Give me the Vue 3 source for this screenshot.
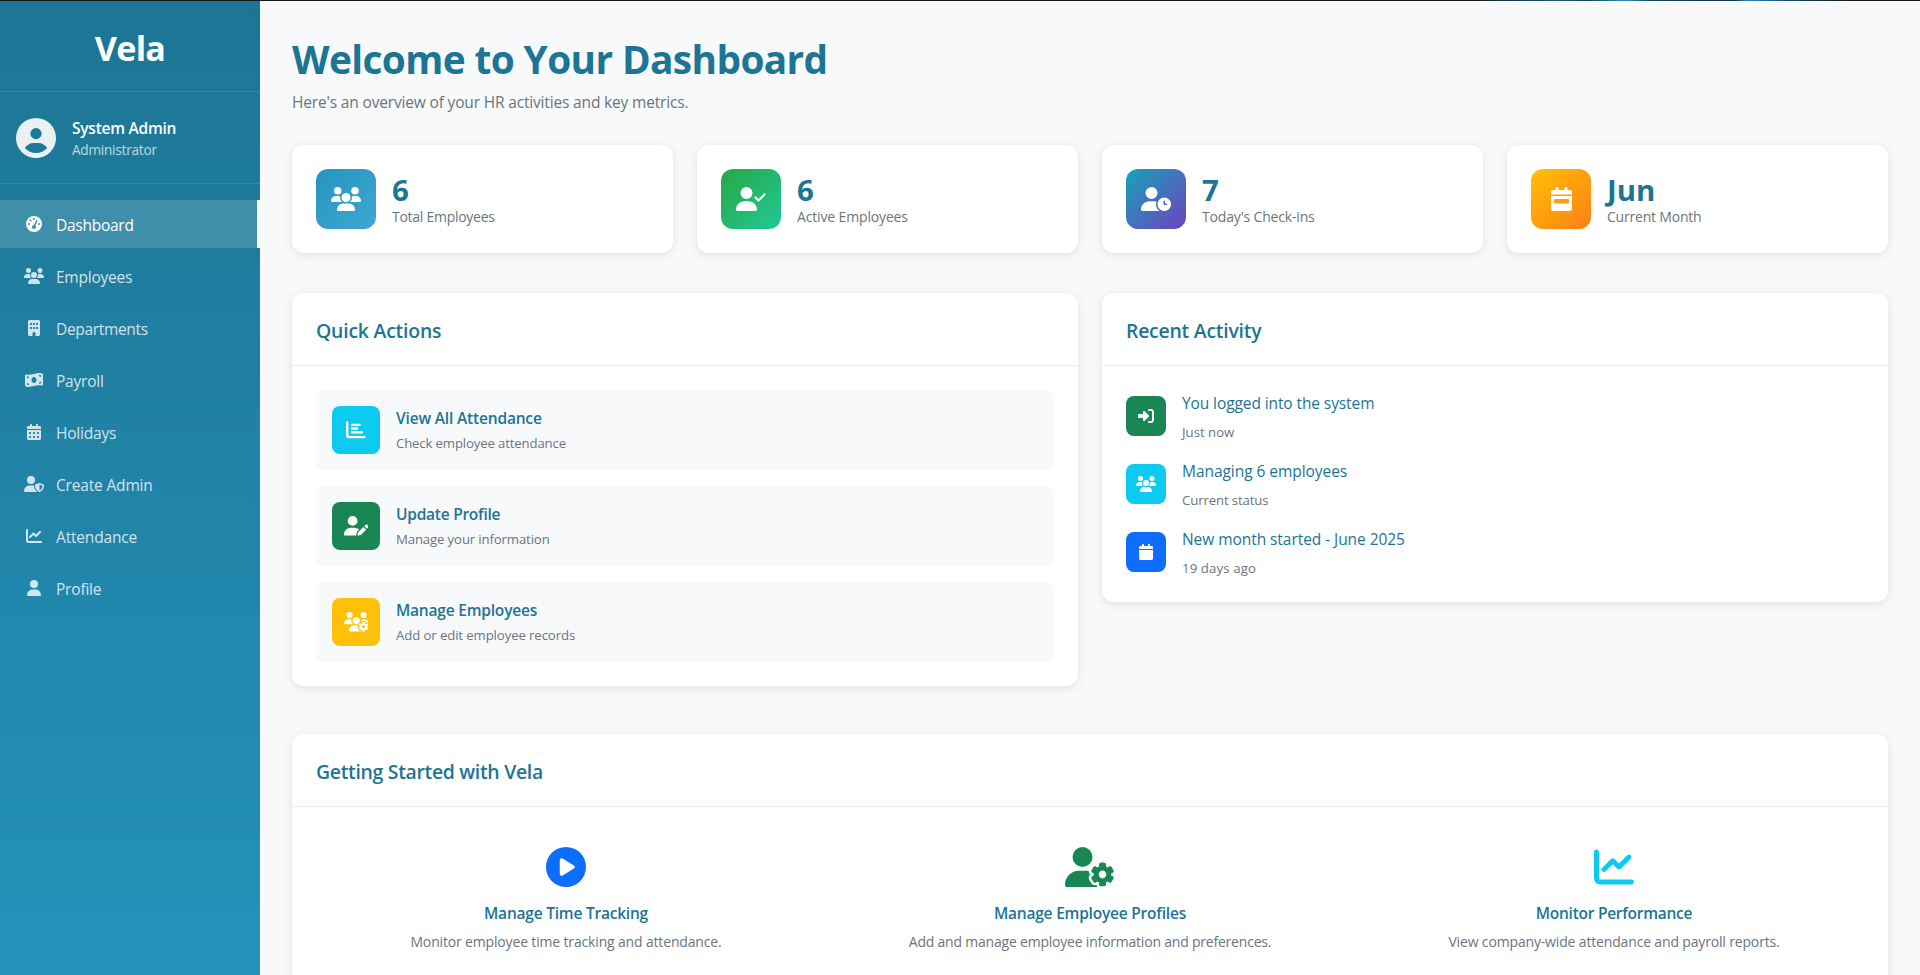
<script setup>
import { h } from 'vue'

const userPath = 'M224 256A128 128 0 1 0 224 0a128 128 0 1 0 0 256zm-45.7 48C79.8 304 0 383.8 0 482.3C0 498.7 13.3 512 29.7 512H418.3c16.4 0 29.7-13.3 29.7-29.7C448 383.8 368.2 304 269.7 304H178.3z'
const calendarTop = 'M128 0c17.7 0 32 14.3 32 32V64H288V32c0-17.7 14.3-32 32-32s32 14.3 32 32V64h48c26.5 0 48 21.5 48 48v48H0V112C0 85.5 21.5 64 48 64H96V32c0-17.7 14.3-32 32-32zM0 192H448V464c0 26.5-21.5 48-48 48H48c-26.5 0-48-21.5-48-48V192z'

// name: [viewBox width, path]; every glyph is 512 units high
const glyphs = {
  circleUser: [512, 'M399 384.2C376.9 345.8 335.4 320 288 320H224c-47.4 0-88.9 25.8-111 64.2c35.2 39.2 86.2 63.8 143 63.8s107.8-24.7 143-63.8zM0 256a256 256 0 1 1 512 0A256 256 0 1 1 0 256zm256 16a72 72 0 1 0 0-144 72 72 0 1 0 0 144z'],
  gauge: [512, 'M0 256a256 256 0 1 1 512 0A256 256 0 1 1 0 256zM288 96a32 32 0 1 0 -64 0 32 32 0 1 0 64 0zM256 416c35.3 0 64-28.7 64-64c0-17.4-6.9-33.1-18.1-44.6L366 161.7c5.3-12.1-.2-26.3-12.3-31.6s-26.3 .2-31.6 12.3L257.9 288c-.6 0-1.3 0-1.9 0c-35.3 0-64 28.7-64 64s28.7 64 64 64zM176 144a32 32 0 1 0 -64 0 32 32 0 1 0 64 0zM96 288a32 32 0 1 0 0-64 32 32 0 1 0 0 64zm352-32a32 32 0 1 0 -64 0 32 32 0 1 0 64 0z'],
  users: [640, 'M144 0a80 80 0 1 1 0 160A80 80 0 1 1 144 0zM512 0a80 80 0 1 1 0 160A80 80 0 1 1 512 0zM0 298.7C0 239.8 47.8 192 106.7 192h42.7c15.9 0 31 3.5 44.6 9.7c-1.3 7.2-1.9 14.7-1.9 22.3c0 38.2 16.8 72.5 43.3 96c-.2 0-.4 0-.7 0H21.3C9.6 320 0 310.4 0 298.7zM405.3 320c-.2 0-.4 0-.7 0c26.6-23.5 43.3-57.8 43.3-96c0-7.6-.7-15-1.9-22.3c13.6-6.3 28.7-9.7 44.6-9.7h42.7C592.2 192 640 239.8 640 298.7c0 11.8-9.6 21.3-21.3 21.3H405.3zM224 224a96 96 0 1 1 192 0 96 96 0 1 1 -192 0zM128 485.3C128 411.7 187.7 352 261.3 352H378.7C452.3 352 512 411.7 512 485.3c0 14.7-11.9 26.7-26.7 26.7H154.7c-14.7 0-26.7-11.9-26.7-26.7z'],
  building: [384, 'M48 0C21.5 0 0 21.5 0 48V464c0 26.5 21.5 48 48 48h96V432c0-26.5 21.5-48 48-48s48 21.5 48 48v80h96c26.5 0 48-21.5 48-48V48c0-26.5-21.5-48-48-48H48zM64 240c0-8.8 7.2-16 16-16h32c8.8 0 16 7.2 16 16v32c0 8.8-7.2 16-16 16H80c-8.8 0-16-7.2-16-16V240zm112-16h32c8.8 0 16 7.2 16 16v32c0 8.8-7.2 16-16 16H176c-8.8 0-16-7.2-16-16V240c0-8.8 7.2-16 16-16zm80 16c0-8.8 7.2-16 16-16h32c8.8 0 16 7.2 16 16v32c0 8.8-7.2 16-16 16H272c-8.8 0-16-7.2-16-16V240zM80 96h32c8.8 0 16 7.2 16 16v32c0 8.8-7.2 16-16 16H80c-8.8 0-16-7.2-16-16V112c0-8.8 7.2-16 16-16zm80 16c0-8.8 7.2-16 16-16h32c8.8 0 16 7.2 16 16v32c0 8.8-7.2 16-16 16H176c-8.8 0-16-7.2-16-16V112zM272 96h32c8.8 0 16 7.2 16 16v32c0 8.8-7.2 16-16 16H272c-8.8 0-16-7.2-16-16V112c0-8.8 7.2-16 16-16z'],
  money: [576, 'M0 112.5V422.3c0 18 10.1 35 27 41.3c87 32.5 174 10.3 261-11.9c79.8-20.3 159.6-40.7 239.3-18.9c23 6.3 48.7-9.5 48.7-33.4V89.7c0-18-10.1-35-27-41.3C462 15.9 375 38.1 288 60.3C208.2 80.6 128.4 100.9 48.7 79.1C25.6 72.8 0 88.6 0 112.5zM288 352c-44.2 0-80-43-80-96s35.8-96 80-96s80 43 80 96s-35.8 96-80 96zM64 352c35.3 0 64 28.7 64 64H64V352zm64-208c0 35.3-28.7 64-64 64V144h64zM512 304v64H448c0-35.3 28.7-64 64-64zM448 96h64v64c-35.3 0-64-28.7-64-64z'],
  calendar: [448, calendarTop],
  calendarDays: [448, calendarTop + 'M64 272v32c0 8.8 7.2 16 16 16h32c8.8 0 16-7.2 16-16V272c0-8.8-7.2-16-16-16H80c-8.8 0-16 7.2-16 16zm128 0v32c0 8.8 7.2 16 16 16h32c8.8 0 16-7.2 16-16V272c0-8.8-7.2-16-16-16H208c-8.8 0-16 7.2-16 16zm144-16c-8.8 0-16 7.2-16 16v32c0 8.8 7.2 16 16 16h32c8.8 0 16-7.2 16-16V272c0-8.8-7.2-16-16-16H336zM64 400v32c0 8.8 7.2 16 16 16h32c8.8 0 16-7.2 16-16V400c0-8.8-7.2-16-16-16H80c-8.8 0-16 7.2-16 16zm144-16c-8.8 0-16 7.2-16 16v32c0 8.8 7.2 16 16 16h32c8.8 0 16-7.2 16-16V400c0-8.8-7.2-16-16-16H208zm112 16v32c0 8.8 7.2 16 16 16h32c8.8 0 16-7.2 16-16V400c0-8.8-7.2-16-16-16H336c-8.8 0-16 7.2-16 16z'],
  calendarWeek: [448, calendarTop + 'M80 256c-8.8 0-16 7.2-16 16v64c0 8.8 7.2 16 16 16H368c8.8 0 16-7.2 16-16V272c0-8.8-7.2-16-16-16H80z'],
  userShield: [640, 'M224 256A128 128 0 1 0 224 0a128 128 0 1 0 0 256zm-45.7 48C79.8 304 0 383.8 0 482.3C0 498.7 13.3 512 29.7 512H418.3c1.8 0 3.5-.2 5.3-.5c-76.3-55.1-99.8-141-103.1-200.2c-16.1-4.8-33.1-7.3-50.7-7.3H178.3zm308.8-78.3l-120 48C358 277.4 352 286.2 352 296c0 63.3 25.9 168.8 134.8 214.2c5.9 2.5 12.6 2.5 18.5 0C614.1 464.8 640 359.3 640 296c0-9.8-6-18.6-15.1-22.3l-120-48c-5.7-2.3-12.1-2.3-17.8 0zM591.4 312c-3.9 50.7-27.2 116.7-95.4 149.7V273.8L591.4 312z'],
  chartLine: [512, 'M64 64c0-17.7-14.3-32-32-32S0 46.3 0 64V400c0 44.2 35.8 80 80 80H480c17.7 0 32-14.3 32-32s-14.3-32-32-32H80c-8.8 0-16-7.2-16-16V64zm406.6 86.6c12.5-12.5 12.5-32.8 0-45.3s-32.8-12.5-45.3 0L320 210.7l-57.4-57.4c-12.5-12.5-32.8-12.5-45.3 0l-112 112c-12.5 12.5-12.5 32.8 0 45.3s32.8 12.5 45.3 0L240 221.3l57.4 57.4c12.5 12.5 32.8 12.5 45.3 0l128-128z'],
  chartBar: [512, 'M32 32c17.7 0 32 14.3 32 32V400c0 8.8 7.2 16 16 16H480c17.7 0 32 14.3 32 32s-14.3 32-32 32H80c-44.2 0-80-35.8-80-80V64C0 46.3 14.3 32 32 32zm96 96c0-17.7 14.3-32 32-32l192 0c17.7 0 32 14.3 32 32s-14.3 32-32 32l-192 0c-17.7 0-32-14.3-32-32zm32 64H288c17.7 0 32 14.3 32 32s-14.3 32-32 32H160c-17.7 0-32-14.3-32-32s14.3-32 32-32zm0 96H416c17.7 0 32 14.3 32 32s-14.3 32-32 32H160c-17.7 0-32-14.3-32-32s14.3-32 32-32z'],
  user: [448, userPath],
  userCheck: [640, userPath + 'M625 177L497 305c-9.4 9.4-24.6 9.4-33.9 0l-64-64c-9.4-9.4-9.4-24.6 0-33.9s24.6-9.4 33.9 0l47 47L591 143c9.4-9.4 24.6-9.4 33.9 0s9.4 24.6 0 33.9z'],
  userClock: [640, 'M224 0a128 128 0 1 1 0 256A128 128 0 1 1 224 0zM178.3 304h91.4c20.6 0 40.4 3.5 58.8 9.9C323 331 320 349.1 320 368c0 59.5 29.5 112.1 74.8 144H29.7C13.3 512 0 498.7 0 482.3C0 383.8 79.8 304 178.3 304zM352 368a144 144 0 1 1 288 0 144 144 0 1 1 -288 0zm144-80c-8.8 0-16 7.2-16 16v64c0 8.8 7.2 16 16 16h48c8.8 0 16-7.2 16-16s-7.2-16-16-16H512V304c0-8.8-7.2-16-16-16z'],
  userPen: [640, 'M224 256A128 128 0 1 0 224 0a128 128 0 1 0 0 256zm-45.7 48C79.8 304 0 383.8 0 482.3C0 498.7 13.3 512 29.7 512H322.8c-3.1-8.8-3.7-18.4-1.4-27.8l15-60.1c2.8-11.3 8.6-21.5 16.8-29.7l40.3-40.3c-32.1-31-75.7-50.1-123.9-50.1H178.3zm435.5-68.3c-15.6-15.6-40.9-15.6-56.6 0l-29.4 29.4 71 71 29.4-29.4c15.6-15.6 15.6-40.9 0-56.6l-14.4-14.4zM375.9 417c-4.1 4.1-7 9.2-8.4 14.9l-15 60.1c-1.4 5.5 .2 11.2 4.2 15.2s9.7 5.6 15.2 4.2l60.1-15c5.6-1.4 10.8-4.3 14.9-8.4L576.1 358.7l-71-71L375.9 417z'],
  userGear: [640, 'M224 0a128 128 0 1 1 0 256A128 128 0 1 1 224 0zM178.3 304h91.4c11.8 0 23.4 1.2 34.5 3.3c-2.1 18.5 7.4 35.6 21.8 44.8c-16.6 10.6-26.7 31.6-20 53.3c4 12.9 9.4 25.5 16.4 37.6s15.2 23.1 24.4 33c15.7 16.9 39.6 18.4 57.2 8.7v.9c0 9.2 2.7 18.5 7.9 26.3H29.7C13.3 512 0 498.7 0 482.3C0 383.8 79.8 304 178.3 304zM436 218.2c0-7 4.5-13.3 11.3-14.8c10.5-2.4 21.5-3.7 32.7-3.7s22.2 1.3 32.7 3.7c6.8 1.5 11.3 7.8 11.3 14.8v30.6c7.9 3.4 15.4 7.7 22.3 12.8l24.9-14.3c6.1-3.5 13.7-2.7 18.5 2.4c7.6 8.1 14.3 17.2 20.1 27.2s10.3 20.4 13.5 31c2.1 6.7-1.1 13.7-7.2 17.2l-25 14.4c.4 4 .7 8.1 .7 12.3s-.2 8.2-.7 12.3l25 14.4c6.1 3.5 9.2 10.5 7.2 17.2c-3.3 10.6-7.8 21-13.5 31s-12.5 19.1-20.1 27.2c-4.8 5.1-12.5 5.9-18.5 2.4l-24.9-14.3c-6.9 5.1-14.3 9.4-22.3 12.8l0 30.6c0 7-4.5 13.3-11.3 14.8c-10.5 2.4-21.5 3.7-32.7 3.7s-22.2-1.3-32.7-3.7c-6.8-1.5-11.3-7.8-11.3-14.8V454.8c-8-3.4-15.6-7.7-22.5-12.9l-24.7 14.3c-6.1 3.5-13.7 2.7-18.5-2.4c-7.6-8.1-14.3-17.2-20.1-27.2s-10.3-20.4-13.5-31c-2.1-6.7 1.1-13.7 7.2-17.2l24.8-14.3c-.4-4.1-.7-8.2-.7-12.4s.2-8.3 .7-12.4L343.8 325c-6.1-3.5-9.2-10.5-7.2-17.2c3.3-10.6 7.7-21 13.5-31s12.5-19.1 20.1-27.2c4.8-5.1 12.4-5.9 18.5-2.4l24.8 14.3c6.9-5.1 14.5-9.4 22.5-12.9V218.2zm92.1 133.5a48.1 48.1 0 1 0 -96.1 0 48.1 48.1 0 1 0 96.1 0z'],
  usersGear: [640, 'M144 160A80 80 0 1 0 144 0a80 80 0 1 0 0 160zm368 0A80 80 0 1 0 512 0a80 80 0 1 0 0 160zM0 298.7C0 310.4 9.6 320 21.3 320H234.7c.2 0 .4 0 .7 0c-26.6-23.5-43.3-57.8-43.3-96c0-7.6 .7-15 1.9-22.3c-13.6-6.3-28.7-9.7-44.6-9.7H106.7C47.8 192 0 239.8 0 298.7zM320 320c24 0 45.9-8.8 62.7-23.3c2.5-3.7 5.2-7.3 8-10.7c2.7-3.3 5.7-6.1 9-8.3C410 262.3 416 243.9 416 224c0-53-43-96-96-96s-96 43-96 96s43 96 96 96zm65.4 60.2c-10.3-5.9-18.1-16.2-20.8-28.2H261.3C187.7 352 128 411.7 128 485.3c0 14.7 11.9 26.7 26.7 26.7H455.2c-2.1-5.2-3.2-10.9-3.2-16.4v-3c-1.3-.7-2.7-1.5-4-2.3l-2.6 1.5c-16.8 9.7-40.5 8-54.7-9.7c-4.5-5.6-8.6-11.5-12.4-17.6l-.1-.2-.1-.2-2.4-4.1-.1-.2-.1-.2c-3.4-6.2-6.4-12.6-9-19.3c-8.2-21.2 2.2-42.6 19-52.3l2.7-1.5c0-.8 0-1.5 0-2.3s0-1.5 0-2.3l-2.7-1.5zM533.3 192H490.7c-15.9 0-31 3.5-44.6 9.7c1.3 7.2 1.9 14.7 1.9 22.3c0 17.4-3.5 33.9-9.7 49c2.5 .9 4.9 2 7.1 3.3l2.6 1.5c1.3-.8 2.6-1.6 4-2.3v-3c0-19.4 13.3-39.1 35.8-42.6c7.9-1.2 16-1.9 24.2-1.9s16.3 .6 24.2 1.9c22.5 3.5 35.8 23.2 35.8 42.6v3c1.3 .7 2.7 1.5 4 2.3l2.6-1.5c16.8-9.7 40.5-8 54.7 9.7c2.3 2.8 4.5 5.8 6.6 8.7c-2.1-57.1-49-102.7-106.6-102.7zm91.3 163.9c6.3-3.6 9.5-11.1 6.8-18c-2.1-5.5-4.6-10.8-7.4-15.9l-2.3-4c-3.1-5.1-6.5-9.9-10.2-14.5c-4.6-5.7-12.7-6.7-19-3L574.4 311c-8.9-7.6-19.1-13.6-30.4-17.6v-21c0-7.3-4.9-13.8-12.1-14.9c-6.5-1-13.1-1.5-19.9-1.5s-13.4 .5-19.9 1.5c-7.2 1.1-12.1 7.6-12.1 14.9v21c-11.2 4-21.5 10-30.4 17.6l-18.2-10.5c-6.3-3.6-14.4-2.6-19 3c-3.7 4.6-7.1 9.5-10.2 14.6l-2.3 3.9c-2.8 5.1-5.3 10.4-7.4 15.9c-2.6 6.8 .5 14.3 6.8 17.9l18.2 10.5c-1 5.7-1.6 11.6-1.6 17.6s.6 11.9 1.6 17.5l-18.2 10.5c-6.3 3.6-9.5 11.1-6.8 17.9c2.1 5.5 4.6 10.7 7.4 15.8l2.4 4.1c3 5.1 6.4 9.9 10.1 14.5c4.6 5.7 12.7 6.7 19 3L449.6 457c8.9 7.6 19.2 13.6 30.4 17.6v21c0 7.3 4.9 13.8 12.1 14.9c6.5 1 13.1 1.5 19.9 1.5s13.4-.5 19.9-1.5c7.2-1.1 12.1-7.6 12.1-14.9v-21c11.2-4 21.5-10 30.4-17.6l18.2 10.5c6.3 3.6 14.4 2.6 19-3c3.7-4.6 7.1-9.4 10.1-14.5l2.4-4.2c2.8-5.1 5.3-10.3 7.4-15.8c2.6-6.8-.5-14.3-6.8-17.9l-18.2-10.5c1-5.7 1.6-11.6 1.6-17.5s-.6-11.9-1.6-17.6l18.2-10.5zM472 384a40 40 0 1 1 80 0 40 40 0 1 1 -80 0z'],
  signIn: [512, 'M217.9 105.9L340.7 228.7c7.2 7.2 11.3 17.1 11.3 27.3s-4.1 20.1-11.3 27.3L217.9 406.1c-6.4 6.4-15 9.9-24 9.9c-18.7 0-33.9-15.2-33.9-33.9l0-62.1L32 320c-17.7 0-32-14.3-32-32l0-64c0-17.7 14.3-32 32-32l128 0 0-62.1c0-18.7 15.2-33.9 33.9-33.9c9 0 17.6 3.6 24 9.9zM352 416l64 0c17.7 0 32-14.3 32-32l0-256c0-17.7-14.3-32-32-32l-64 0c-17.7 0-32-14.3-32-32s14.3-32 32-32l64 0c53 0 96 43 96 96l0 256c0 53-43 96-96 96l-64 0c-17.7 0-32-14.3-32-32s14.3-32 32-32z'],
  circlePlay: [512, 'M0 256a256 256 0 1 1 512 0A256 256 0 1 1 0 256zM188.3 147.1c-7.6 4.2-12.3 12.3-12.3 20.9V344c0 8.7 4.7 16.7 12.3 20.9s16.8 4.1 24.3-.5l144-88c7.1-4.4 11.5-12.1 11.5-20.5s-4.4-16.1-11.5-20.5l-144-88c-7.4-4.5-16.7-4.7-24.3-.5z'],
}

const Icon = ({ name, size }) => {
  const [w, d] = glyphs[name]
  return h('svg', {
    viewBox: `0 0 ${w} 512`,
    width: (w / 512) * size,
    height: size,
    fill: 'currentColor',
    'fill-rule': 'evenodd',
    'aria-hidden': 'true',
  }, [h('path', { d })])
}
Icon.props = ['name', 'size']

const track = (ls) => ({ letterSpacing: `${ls}px` })

const nav = [
  { label: 'Dashboard', icon: 'gauge', ls: -0.26, active: true },
  { label: 'Employees', icon: 'users', ls: -0.24 },
  { label: 'Departments', icon: 'building', ls: -0.33 },
  { label: 'Payroll', icon: 'money', ls: -0.22 },
  { label: 'Holidays', icon: 'calendarDays', ls: -0.2 },
  { label: 'Create Admin', icon: 'userShield', ls: -0.17 },
  { label: 'Attendance', icon: 'chartLine', ls: -0.17 },
  { label: 'Profile', icon: 'user', ls: -0.2 },
]

const stats = [
  { value: '6', label: 'Total Employees', icon: 'users', tone: 'blue', ls: -0.27 },
  { value: '6', label: 'Active Employees', icon: 'userCheck', tone: 'green', ls: -0.15 },
  { value: '7', label: "Today's Check-ins", icon: 'userClock', tone: 'violet', ls: -0.17 },
  { value: 'Jun', label: 'Current Month', icon: 'calendarWeek', tone: 'orange', ls: -0.2 },
]

const actions = [
  { title: 'View All Attendance', text: 'Check employee attendance', icon: 'chartBar', tone: 'info', ls: -0.17, tls: -0.15 },
  { title: 'Update Profile', text: 'Manage your information', icon: 'userPen', tone: 'success', ls: -0.25, tls: -0.14 },
  { title: 'Manage Employees', text: 'Add or edit employee records', icon: 'usersGear', tone: 'warning', ls: -0.2, tls: -0.11 },
]

const activity = [
  { title: 'You logged into the system', time: 'Just now', icon: 'signIn', tone: 'success', ls: -0.1, tls: 0 },
  { title: 'Managing 6 employees', time: 'Current status', icon: 'users', tone: 'info', ls: -0.05, tls: -0.12 },
  { title: 'New month started - June 2025', time: '19 days ago', icon: 'calendar', tone: 'primary', ls: -0.06, tls: 0.12 },
]

const steps = [
  { title: 'Manage Time Tracking', text: 'Monitor employee time tracking and attendance.', icon: 'circlePlay', tone: 'primary', ls: -0.22, tls: -0.16 },
  { title: 'Manage Employee Profiles', text: 'Add and manage employee information and preferences.', icon: 'userGear', tone: 'success', ls: -0.21, tls: -0.21 },
  { title: 'Monitor Performance', text: 'View company-wide attendance and payroll reports.', icon: 'chartLine', tone: 'info', ls: -0.26, tls: -0.16 },
]
</script>

<template>
  <div class="page">
    <div class="topline"></div>
    <div class="shell">
      <aside class="sidebar">
        <div class="brand">Vela</div>
        <div class="account">
          <Icon class="avatar" name="circleUser" :size="40" />
          <div>
            <div class="account-name">System Admin</div>
            <div class="account-role">Administrator</div>
          </div>
        </div>
        <nav class="menu">
          <a v-for="item in nav" :key="item.label" class="menu-item" :class="{ active: item.active }">
            <span class="menu-icon"><Icon :name="item.icon" :size="16" /></span>
            <span class="menu-label" :style="track(item.ls)">{{ item.label }}</span>
          </a>
        </nav>
      </aside>

      <main class="content">
        <h1>Welcome to Your Dashboard</h1>
        <p class="lead">Here's an overview of your HR activities and key metrics.</p>

        <section class="stats">
          <div v-for="s in stats" :key="s.label" class="card stat">
            <div class="stat-icon" :class="s.tone"><Icon :name="s.icon" :size="24" /></div>
            <div>
              <div class="stat-value">{{ s.value }}</div>
              <div class="stat-label" :style="track(s.ls)">{{ s.label }}</div>
            </div>
          </div>
        </section>

        <section class="columns">
          <div class="card">
            <h2 class="quick">Quick Actions</h2>
            <div class="card-body actions">
              <a v-for="a in actions" :key="a.title" class="action">
                <div class="action-icon" :class="`bg-${a.tone}`"><Icon :name="a.icon" :size="19.6" /></div>
                <div>
                  <div class="item-title" :style="track(a.ls)">{{ a.title }}</div>
                  <div class="action-text" :style="track(a.tls)">{{ a.text }}</div>
                </div>
              </a>
            </div>
          </div>

          <div class="card">
            <h2>Recent Activity</h2>
            <div class="card-body activity">
              <div v-for="a in activity" :key="a.title" class="event">
                <div class="event-icon" :class="`bg-${a.tone}`"><Icon :name="a.icon" :size="16" /></div>
                <div>
                  <div class="event-title" :style="track(a.ls)">{{ a.title }}</div>
                  <div class="event-time" :style="track(a.tls)">{{ a.time }}</div>
                </div>
              </div>
            </div>
          </div>
        </section>

        <section class="card">
          <h2 class="started">Getting Started with Vela</h2>
          <div class="steps">
            <div v-for="s in steps" :key="s.title" class="step">
              <Icon :class="`fg-${s.tone}`" :name="s.icon" :size="40" />
              <div class="item-title step-title" :style="track(s.ls)">{{ s.title }}</div>
              <div class="step-text" :style="track(s.tls)">{{ s.text }}</div>
            </div>
          </div>
        </section>
      </main>
    </div>
  </div>
</template>

<style>
body {
  margin: 0;
  overflow: hidden;
}
</style>

<style scoped>
.page {
  display: flex;
  flex-direction: column;
  height: 975px;
  overflow: hidden;
  background: #f8f9fb;
  font-family: "Segoe UI", "Open Sans", "Noto Sans", sans-serif;
  font-size: 15.5px;
  color: #1c7594;
}
.page * {
  box-sizing: border-box;
}
.page svg {
  display: block;
  flex: none;
}
.topline {
  flex: none;
  height: 1px;
  background: linear-gradient(90deg, #16191c 0 1480px, #123442 1500px, #1d5a70 1560px, #14485a 1590px, #2f8fae 1625px, #134455 1650px, #0f3445 1735px, #2c88ae 1748px, #17506e 1785px, #12303b 1820px, #16191c 1850px);
}
.shell {
  display: flex;
  flex: 1;
  min-height: 0;
}
.sidebar {
  flex: none;
  width: 260px;
  background: linear-gradient(180deg, #1d7594 0%, #2492bb 100%);
  color: #fff;
}
.brand {
  height: 91px;
  padding-top: 26px;
  border-bottom: 1px solid rgba(255, 255, 255, 0.1);
  font-size: 34.1px;
  font-weight: 700;
  line-height: 42px;
  letter-spacing: -0.7px;
  text-align: center;
}
.account {
  display: flex;
  align-items: center;
  gap: 16px;
  height: 92px;
  padding: 0 16px;
  border-bottom: 1px solid rgba(255, 255, 255, 0.1);
}
.avatar {
  opacity: 0.9;
}
.account-name {
  font-weight: 600;
  line-height: 24px;
  letter-spacing: -0.24px;
}
.account-role {
  margin-top: -1px;
  font-size: 13.6px;
  line-height: 21px;
  letter-spacing: -0.23px;
  opacity: 0.7;
}
.menu {
  display: flex;
  flex-direction: column;
  gap: 4px;
  padding-top: 16px;
}
.menu-item {
  display: flex;
  align-items: center;
  gap: 12px;
  height: 48px;
  padding-left: 24px;
  border-right: 3px solid transparent;
  color: rgba(255, 255, 255, 0.8);
  line-height: 24px;
}
.menu-item.active {
  border-right-color: #fff;
  background: rgba(255, 255, 255, 0.15);
  background-clip: padding-box;
  color: #fff;
}
.menu-label {
  padding-top: 2px;
}
.menu-icon {
  display: flex;
  justify-content: center;
  width: 20px;
}
.content {
  flex: 1;
  min-width: 0;
  padding: 34px 32px 32px;
}
h1 {
  margin: 0 0 7px;
  font-size: 38.8px;
  font-weight: 700;
  line-height: 48px;
  letter-spacing: -0.61px;
}
.lead {
  margin: 0 0 31px;
  color: #6c757d;
  line-height: 24px;
  letter-spacing: -0.165px;
}
.card {
  border-radius: 12px;
  background: #fff;
  box-shadow: 0 2px 10px rgba(0, 0, 0, 0.1);
}
.stats {
  display: grid;
  grid-template-columns: repeat(4, 1fr);
  gap: 24px;
  margin-bottom: 40px;
}
.stat {
  display: flex;
  align-items: center;
  gap: 16px;
  padding: 24px;
}
.stat-icon {
  display: grid;
  place-items: center;
  width: 60px;
  height: 60px;
  border-radius: 12px;
  color: #fff;
}
.blue { background: linear-gradient(135deg, #2596be, #3fa7d0); }
.green { background: linear-gradient(135deg, #28a745, #20c997); }
.violet { background: linear-gradient(135deg, #17a2b8, #6f42c1); }
.orange { background: linear-gradient(135deg, #ffc107, #fd7e14); }
.stat-value {
  font-size: 29.4px;
  font-weight: 700;
  line-height: 36px;
}
.stat-label {
  margin-top: -2px;
  color: #6c757d;
  font-size: 14px;
  line-height: 21px;
}
.columns {
  display: grid;
  grid-template-columns: 1fr 1fr;
  align-items: start;
  gap: 24px;
  margin-bottom: 48px;
}
h2 {
  height: 73px;
  margin: 0;
  padding: 26px 24px 0;
  border-bottom: 1px solid #e9ecef;
  font-size: 19.4px;
  font-weight: 600;
  line-height: 24px;
  letter-spacing: -0.22px;
}
.quick { letter-spacing: -0.2px; }
.started { letter-spacing: -0.29px; }
.card-body {
  display: flex;
  flex-direction: column;
  gap: 16px;
  padding: 24px;
}
.action {
  display: flex;
  align-items: center;
  gap: 16px;
  height: 80px;
  padding: 16px;
  border-radius: 8px;
  background: #f8f9fb;
}
.action-icon {
  display: grid;
  place-items: center;
  width: 48px;
  height: 48px;
  border-radius: 8px;
  color: #fff;
}
.item-title {
  font-weight: 600;
  line-height: 20px;
}
.action-text {
  margin-top: 5px;
  color: #6c757d;
  font-size: 13.2px;
  line-height: 20px;
}
.event {
  display: flex;
  align-items: center;
  gap: 16px;
  height: 52px;
}
.event-icon {
  display: grid;
  place-items: center;
  width: 40px;
  height: 40px;
  border-radius: 8px;
  color: #fff;
}
.event-title {
  line-height: 26px;
}
.event-time {
  margin-top: 6px;
  color: #6c757d;
  font-size: 13.2px;
  line-height: 20px;
}
.steps {
  display: grid;
  grid-template-columns: repeat(3, 1fr);
  padding: 24px 12px;
}
.step {
  display: flex;
  flex-direction: column;
  align-items: center;
  padding: 16px;
}
.step-title {
  margin-top: 16px;
}
.step-text {
  margin-top: 8px;
  color: #6c757d;
  font-size: 14px;
  line-height: 21px;
}
.bg-primary { background: #0d6efd; }
.bg-success { background: #198754; }
.bg-info { background: #0dcaf0; }
.bg-warning { background: #ffc107; }
.fg-primary { color: #0d6efd; }
.fg-success { color: #198754; }
.fg-info { color: #0dcaf0; }
</style>
